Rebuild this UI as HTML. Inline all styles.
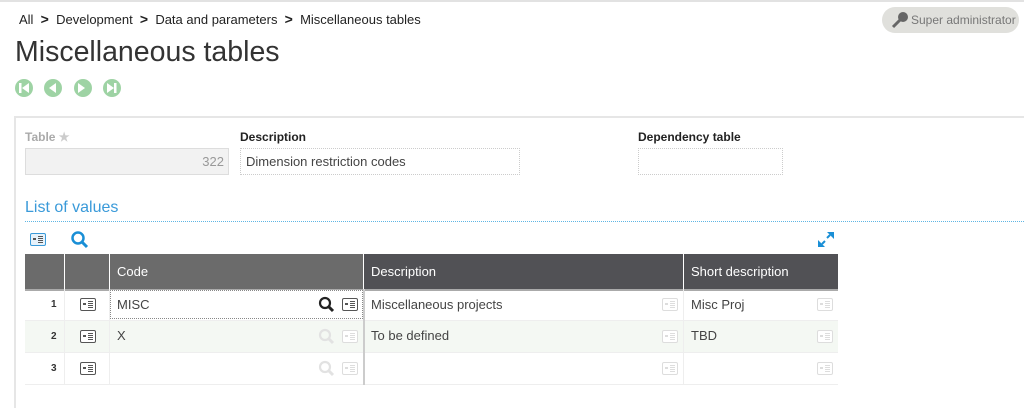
<!DOCTYPE html>
<html><head><style>
body{margin:0;width:1024px;height:403px;overflow:hidden;background:#fff;font-family:"Liberation Sans",sans-serif;color:#333;position:relative}
.a{position:absolute}
.ic{position:absolute;width:16px;height:13px;border:1.5px solid #555;border-radius:2px;box-sizing:border-box;background:#fff}
.ic:before{content:"";position:absolute;left:2px;top:4px;width:3px;height:2px;background:#555}
.ic:after{content:"";position:absolute;left:7px;top:2px;width:5px;height:1px;background:#555;box-shadow:0 2px #555,0 4px #555,0 6px #555}
.lt{border-color:#ddd}.lt:before,.lt:after{background:#ddd}.lt:after{box-shadow:0 2px #ddd,0 4px #ddd,0 6px #ddd}
.hd{position:absolute;top:254px;height:35px;color:#fff;font-size:13px;line-height:36px;padding-left:7px;box-sizing:border-box}
.cell{position:absolute;font-size:13px;line-height:30px;padding-left:7px;box-sizing:border-box}
.nav{position:absolute;top:79px;width:18px;height:18px;border-radius:50%;background:#9ed3a4}
</style></head><body>
<div class="a" style="left:0;top:0;width:1024px;height:2px;background:#e2e2e2"></div>
<div class="a" style="left:19px;top:11px;font-size:13px;color:#222">All &nbsp;<b style="font-size:14px">&gt;</b>&nbsp; Development &nbsp;<b style="font-size:14px">&gt;</b>&nbsp; Data and parameters &nbsp;<b style="font-size:14px">&gt;</b>&nbsp; Miscellaneous tables</div>
<div class="a" style="left:882px;top:7px;width:137px;height:26px;border-radius:13px;background:#e0e0dc;font-size:12px;color:#777;line-height:26px;padding-left:29px;box-sizing:border-box;white-space:nowrap">Super administrator</div>
<svg class="a" style="left:891px;top:11px" width="18" height="18"><circle cx="12" cy="6" r="5" fill="#666"/><path d="M9 9 L2 16" stroke="#666" stroke-width="3"/></svg>
<div class="a" style="left:15px;top:36px;font-size:28.5px;color:#333">Miscellaneous tables</div>
<div class="nav" style="left:15px"></div><div class="nav" style="left:44px"></div><div class="nav" style="left:74px"></div><div class="nav" style="left:103px"></div>
<svg class="a" style="left:15px;top:79px" width="110" height="18" fill="#fff"><rect x="4" y="4" width="2.5" height="10"/><path d="M14 4 L7 9 L14 14Z"/><path d="M41 4 L34 9 L41 14Z"/><path d="M63 4 L70 9 L63 14Z"/><path d="M92 4 L99 9 L92 14Z"/><rect x="99" y="4" width="2.5" height="10"/></svg>
<div class="a" style="left:14px;top:116px;width:1010px;height:290px;border-top:2px solid #e6e6e6;border-left:2px solid #e6e6e6"></div>
<div class="a" style="left:25px;top:130px;font-size:12px;font-weight:bold;color:#aaa">Table <span style="color:#ccc">★</span></div>
<div class="a" style="left:25px;top:148px;width:204px;height:27px;background:#f2f2f2;border:1px solid #ddd;box-sizing:border-box;text-align:right;font-size:13px;color:#999;line-height:25px;padding-right:4px">322</div>
<div class="a" style="left:240px;top:130px;font-size:12px;font-weight:bold;color:#222">Description</div>
<div class="a" style="left:240px;top:148px;width:280px;height:27px;border:1px dotted #ccc;box-sizing:border-box;font-size:13px;color:#444;line-height:25px;padding-left:5px">Dimension restriction codes</div>
<div class="a" style="left:638px;top:130px;font-size:12px;font-weight:bold;color:#222">Dependency table</div>
<div class="a" style="left:638px;top:148px;width:145px;height:27px;border:1px dotted #ccc;box-sizing:border-box"></div>
<div class="a" style="left:25px;top:199px;font-size:16px;color:#3a9ad9">List of values</div>
<div class="a" style="left:25px;top:221px;width:999px;border-top:1px dotted #5fb6e4"></div>
<div class="ic" style="left:30px;top:233px;border-color:#3a9ad9;background:#e6f2fb"></div>
<svg class="a" style="left:70px;top:231px" width="20" height="18"><circle cx="8" cy="7" r="5.5" fill="none" stroke="#1a8fd6" stroke-width="2.5"/><path d="M12 11 L17 16" stroke="#1a8fd6" stroke-width="3"/></svg>
<svg class="a" style="left:817px;top:231px" width="18" height="17" fill="#1a8fd6"><path d="M10 1h7v7z"/><path d="M1 9v7h7z"/><path d="M13 4L10 7M5 13L8 10" stroke="#1a8fd6" stroke-width="2"/></svg>
<div class="hd" style="left:25px;width:39px;background:#6b6b6b"></div>
<div class="hd" style="left:65px;width:44px;background:#6b6b6b"></div>
<div class="hd" style="left:110px;width:253px;background:#6b6b6b">Code</div>
<div class="hd" style="left:364px;width:319px;background:#515155">Description</div>
<div class="hd" style="left:684px;width:154px;background:#515155">Short description</div>
<div class="a" style="left:25px;top:289px;width:813px;height:2px;background:#aaa"></div>
<div class="a" style="left:25px;top:321px;width:813px;height:31px;background:#f4f8f3"></div>
<div class="a" style="left:25px;top:320px;width:813px;border-top:1px solid #eee"></div>
<div class="a" style="left:25px;top:352px;width:813px;border-top:1px solid #eee"></div>
<div class="a" style="left:25px;top:384px;width:813px;border-top:1px solid #eee"></div>
<div class="a" style="left:64px;top:289px;height:96px;border-left:1px solid #eee"></div>
<div class="a" style="left:109px;top:289px;height:96px;border-left:1px solid #eee"></div>
<div class="a" style="left:363px;top:289px;height:96px;border-left:2px solid #ccc"></div>
<div class="a" style="left:683px;top:289px;height:96px;border-left:1px solid #eee"></div>
<div class="a" style="left:110px;top:290px;width:253px;height:29px;border:1px dotted #888;box-sizing:border-box;background:#fff"></div>
<div class="cell" style="left:44px;top:290px;font-size:10px;font-weight:bold">1</div>
<div class="cell" style="left:44px;top:322px;font-size:10px;font-weight:bold">2</div>
<div class="cell" style="left:44px;top:354px;font-size:10px;font-weight:bold">3</div>
<div class="ic" style="left:80px;top:298px"></div><div class="ic" style="left:80px;top:330px"></div><div class="ic" style="left:80px;top:362px"></div>
<div class="cell" style="left:110px;top:290px;color:#444">MISC</div>
<div class="cell" style="left:110px;top:321px;color:#444">X</div>
<div class="cell" style="left:364px;top:290px;color:#444">Miscellaneous projects</div>
<div class="cell" style="left:364px;top:321px;color:#444">To be defined</div>
<div class="cell" style="left:684px;top:290px;color:#444">Misc Proj</div>
<div class="cell" style="left:684px;top:321px;color:#444">TBD</div>
<svg class="a" style="left:318px;top:296px" width="18" height="17"><circle cx="7" cy="7" r="5" fill="none" stroke="#222" stroke-width="2.2"/><path d="M10.5 10.5 L15 15" stroke="#222" stroke-width="3"/></svg>
<svg class="a" style="left:318px;top:328px" width="18" height="17"><circle cx="7" cy="7" r="5" fill="none" stroke="#e2e2e2" stroke-width="2.2"/><path d="M10.5 10.5 L15 15" stroke="#e2e2e2" stroke-width="3"/></svg>
<svg class="a" style="left:318px;top:360px" width="18" height="17"><circle cx="7" cy="7" r="5" fill="none" stroke="#e2e2e2" stroke-width="2.2"/><path d="M10.5 10.5 L15 15" stroke="#e2e2e2" stroke-width="3"/></svg>
<div class="ic" style="left:342px;top:298px"></div>
<div class="ic lt" style="left:342px;top:330px"></div><div class="ic lt" style="left:342px;top:362px"></div>
<div class="ic lt" style="left:662px;top:298px"></div><div class="ic lt" style="left:662px;top:330px"></div><div class="ic lt" style="left:662px;top:362px"></div>
<div class="ic lt" style="left:817px;top:298px"></div><div class="ic lt" style="left:817px;top:330px"></div><div class="ic lt" style="left:817px;top:362px"></div>
</body></html>
